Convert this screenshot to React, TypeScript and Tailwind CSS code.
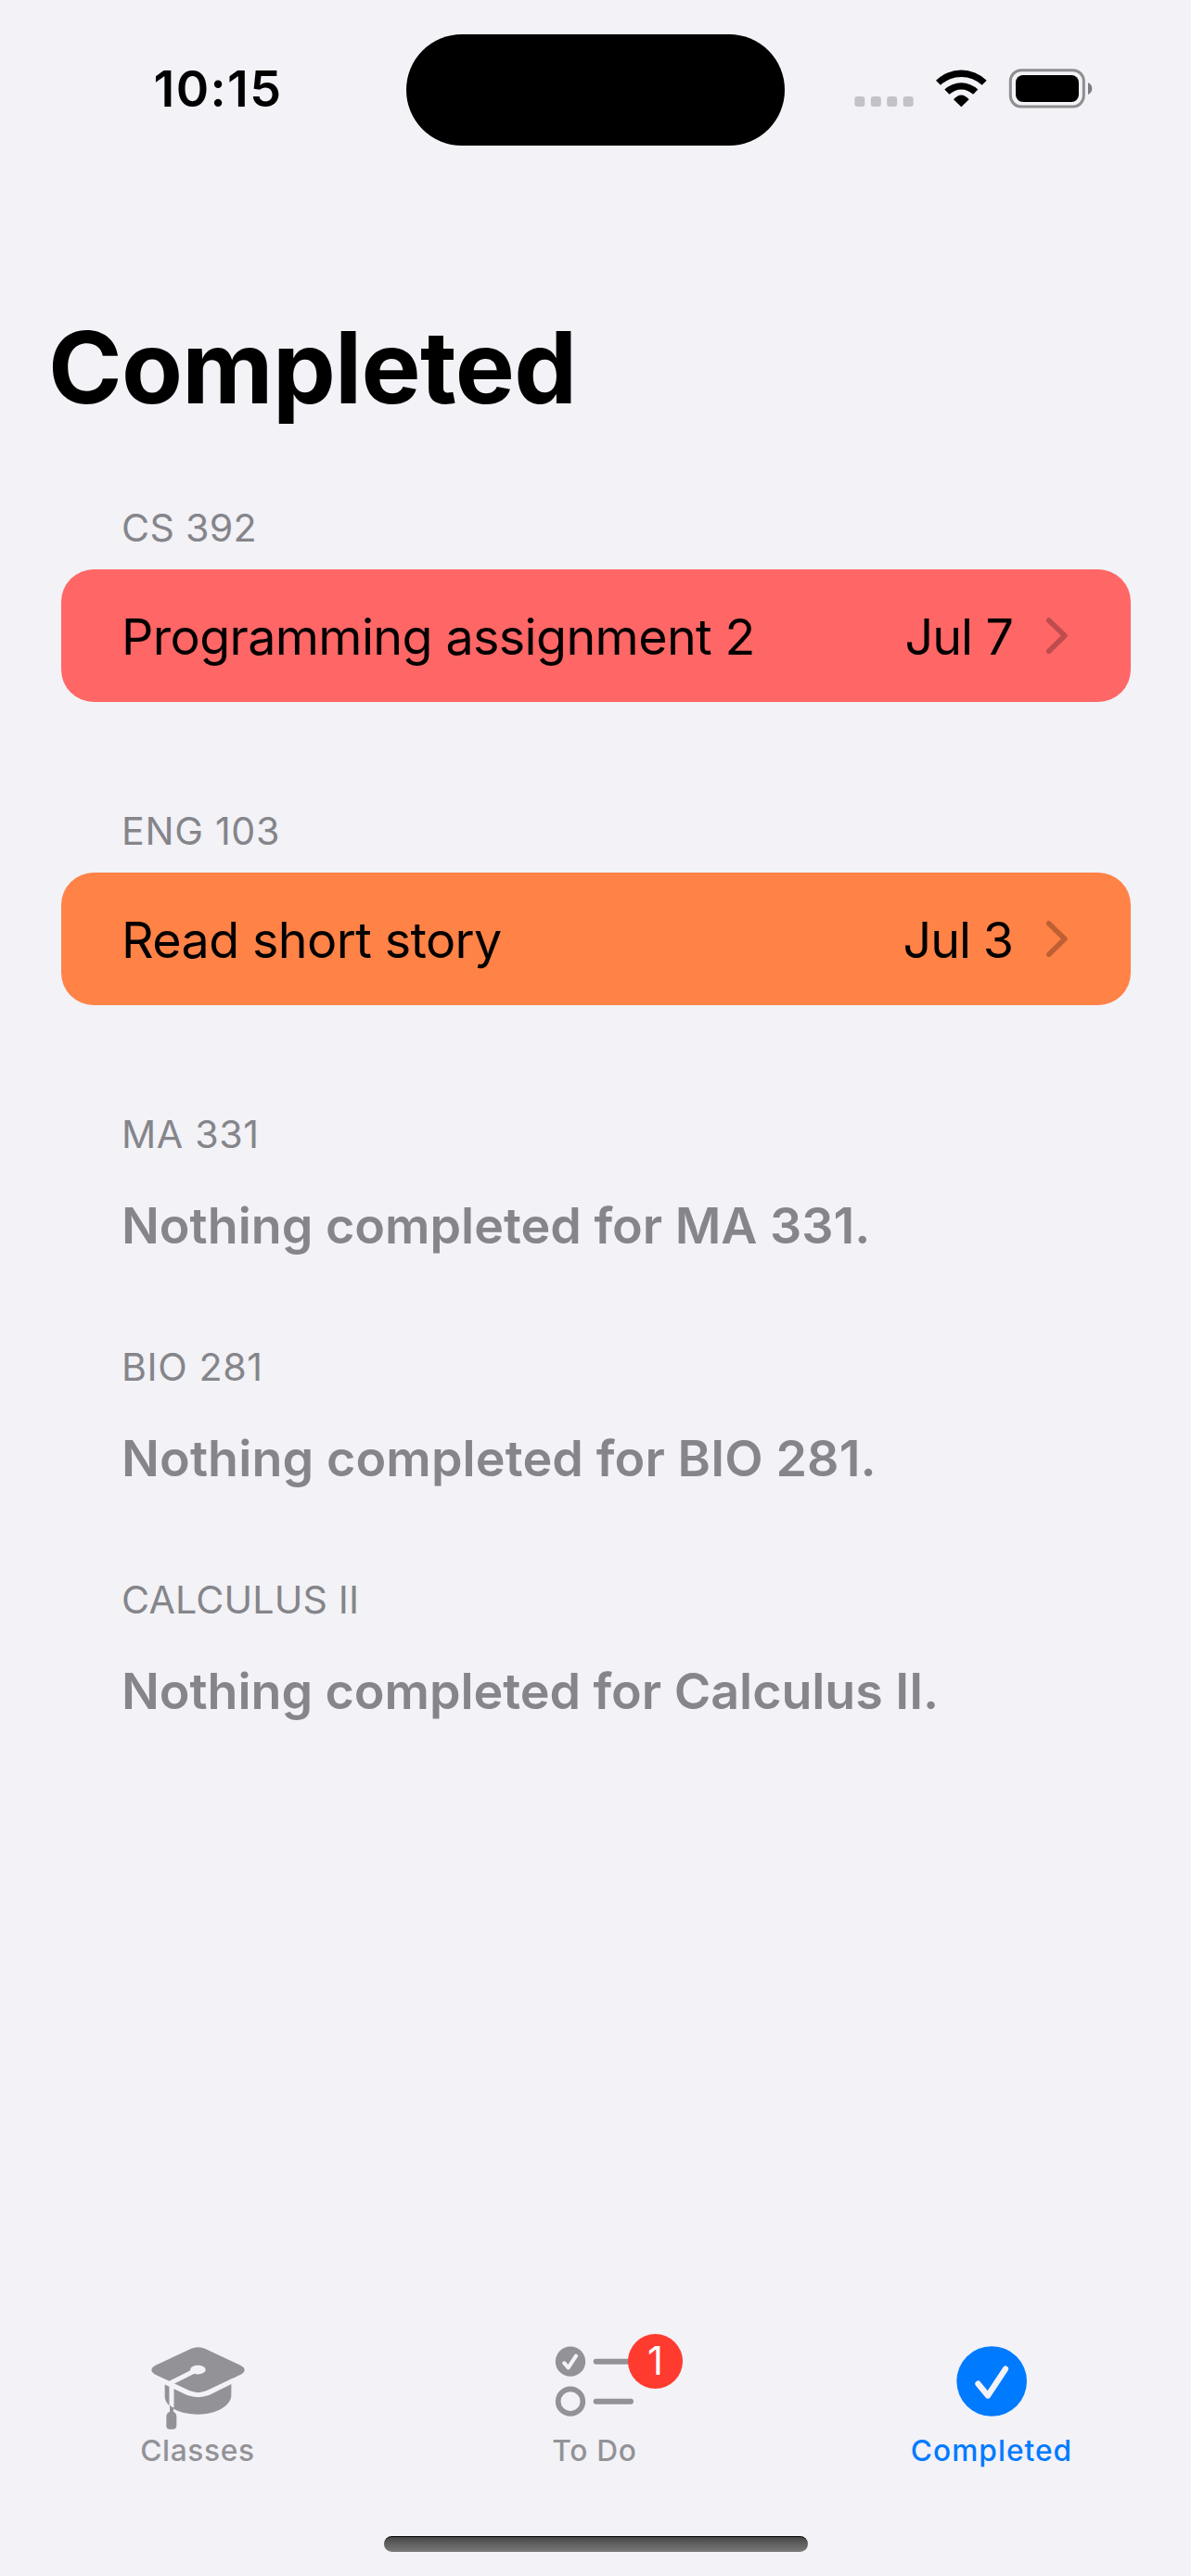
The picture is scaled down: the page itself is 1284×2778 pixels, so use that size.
import type { ReactNode } from 'react';

type Section = {
  course: string;
  headerTracking: string;
  task?: { title: string; titleTracking: string; due: string; dueTracking: string; color: string };
  empty?: { text: string; tracking: string };
};

const sections: Section[] = [
  {
    course: 'CS 392',
    headerTracking: 'tracking-[0.3px]',
    task: {
      title: 'Programming assignment 2',
      titleTracking: 'tracking-[-0.6px]',
      due: 'Jul 7',
      dueTracking: 'tracking-[-0.9px]',
      color: 'bg-[#ff6666]',
    },
  },
  {
    course: 'ENG 103',
    headerTracking: 'tracking-[0.7px]',
    task: {
      title: 'Read short story',
      titleTracking: 'tracking-[-0.6px]',
      due: 'Jul 3',
      dueTracking: 'tracking-[-1.1px]',
      color: 'bg-[#ff8247]',
    },
  },
  {
    course: 'MA 331',
    headerTracking: 'tracking-[0.65px]',
    empty: { text: 'Nothing completed for MA 331.', tracking: 'tracking-[0.01px]' },
  },
  {
    course: 'BIO 281',
    headerTracking: 'tracking-[0.6px]',
    empty: { text: 'Nothing completed for BIO 281.', tracking: 'tracking-[0.14px]' },
  },
  {
    course: 'CALCULUS II',
    headerTracking: 'tracking-[0.15px]',
    empty: { text: 'Nothing completed for Calculus II.', tracking: 'tracking-[-0.04px]' },
  },
];

function StatusBar() {
  return (
    <div className="grid h-[157px] shrink-0 grid-cols-[438px_408px_438px] pt-[36.5px]">
      <div className="flex h-[119px] items-center justify-center pl-[32px] text-[53.8px] font-semibold tracking-[1.4px]">
        10:15
      </div>
      <div className="h-[120px] rounded-full bg-black" />
      <div className="flex h-[117px] items-center pl-[75px]">
        <svg className="h-[42px] w-[64px]" viewBox="243 162 192 126" fill="#c3c2c8">
          <rect x="244" y="252" width="33" height="33" rx="9" />
          <rect x="296.5" y="252" width="33" height="33" rx="9" />
          <rect x="348.5" y="252" width="33" height="33" rx="9" />
          <rect x="401" y="252" width="33" height="33" rx="9" />
        </svg>
        <svg className="ml-[23px] h-[42px] w-[56px]" viewBox="504 162 168 126" fill="#000">
          <path d="M507 200A118 118 0 0 1 671 200L656 215.500A97 97 0 0 0 522 215.500Z" />
          <path d="M535 229.500A78 78 0 0 1 643 229.500L627.500 245.500A55 55 0 0 0 550.500 245.500Z" />
          <path d="M589 286L564 261.500Q589 233 614 261.500Z" />
        </svg>
        <svg className="ml-[23px] h-[43px] w-[91px]" viewBox="741 161 273 129">
          <rect x="748" y="166" width="237" height="118" rx="35" fill="none" stroke="#8f8f92" strokeWidth="9" />
          <rect x="765" y="182" width="204" height="87" rx="24" fill="#000" />
          <path d="M999 206Q1012 213 1012 225.500Q1012 238 999 245Z" fill="#7d7d80" />
        </svg>
      </div>
    </div>
  );
}

function Chevron() {
  return (
    <svg className="h-[39px] w-[23px] opacity-25" viewBox="684 198.500 70 118" fill="none">
      <path d="M692.500 207L744.500 257.500L692.500 308.500" stroke="#000" strokeWidth="17" strokeLinecap="round" strokeLinejoin="round" />
    </svg>
  );
}

function CourseSection({ section }: { section: Section }) {
  const { course, headerTracking, task, empty } = section;
  return (
    <section className={task ? 'mb-[106px]' : 'mb-[66px]'}>
      <h2 className={`mb-[14px] flex h-16 items-center pt-[3px] pl-[131px] text-[41.2px] text-[#85858a] ${headerTracking}`}>
        {course}
      </h2>
      {task && (
        <div className={`mx-[65.5px] flex h-[143px] items-center rounded-[35px] pr-[67.5px] pl-[65.5px] text-[53.8px] ${task.color}`}>
          <span className={`flex-1 pt-[3px] ${task.titleTracking}`}>{task.title}</span>
          <span className={`pt-[3px] ${task.dueTracking}`}>{task.due}</span>
          <span className="ml-[36px]">
            <Chevron />
          </span>
        </div>
      )}
      {empty && (
        <p className={`flex h-[107px] items-center pt-[2px] pl-[131px] text-[53.8px] font-semibold text-[#85858a] ${empty.tracking}`}>
          {empty.text}
        </p>
      )}
    </section>
  );
}

function Tab({ label, color, tracking, children }: { label: string; color: string; tracking: string; children: ReactNode }) {
  return (
    <div className={`flex flex-col items-center ${color}`}>
      <div className="relative h-[96px] w-[110px]">{children}</div>
      <span className={`-mt-[2px] flex h-10 items-center pt-[2px] pr-[2px] text-[31.7px] font-medium ${tracking}`}>{label}</span>
    </div>
  );
}

function ClassesIcon() {
  return (
    <svg className="h-[96px] w-[110px]" viewBox="177 85 330 288" fill="none">
      <path d="M233 208V254C233 288 282 312 340 312C400 312 448 284 448 250V208L372 243Q340 262 308 243Z" fill="currentColor" />
      <path
        d="M317 100Q341 89 364 100L479 154Q503 168 479 183L367 236Q341 247 314 236L202 183Q178 168 202 154Z"
        fill="currentColor"
      />
      <path d="M222 202L308 243Q341 255 373 243L456 202" stroke="#f2f2f7" strokeWidth="15" />
      <ellipse cx="340" cy="168" rx="25" ry="14.500" fill="#f2f2f7" />
      <path d="M330 171L255 209V290" stroke="#f2f2f7" strokeWidth="15" />
      <path d="M249 282L261 292V303Q271 308 271 320V348Q271 360 259 360H249Q238 360 238 348V320Q238 308 249 303Z" fill="currentColor" />
    </svg>
  );
}

function TodoIcon() {
  return (
    <svg className="h-[96px] w-[110px]" viewBox="81 85 330 288" fill="none" strokeLinecap="round" strokeLinejoin="round">
      <circle cx="165" cy="141" r="48.500" fill="currentColor" />
      <path d="M145 146L158 161L183 123" stroke="#f2f2f7" strokeWidth="12.500" />
      <circle cx="165" cy="270" r="40" stroke="currentColor" strokeWidth="17" />
      <path d="M248 141H360M248 270H360" stroke="currentColor" strokeWidth="18" />
    </svg>
  );
}

function CompletedIcon() {
  return (
    <svg className="h-[96px] w-[110px]" viewBox="195 85 330 288" fill="none" strokeLinecap="round" strokeLinejoin="round">
      <circle cx="357.500" cy="205" r="113.500" fill="currentColor" />
      <path d="M313.500 213L345 251.500L402 165" stroke="#f2f2f7" strokeWidth="19" />
    </svg>
  );
}

export default function App() {
  return (
    <div className="flex h-[2778px] w-[1284px] flex-col overflow-hidden bg-[#f2f2f7] font-['Inter',sans-serif] text-black">
      <StatusBar />
      <h1 className="mt-[175px] flex h-32 shrink-0 items-center pt-[2px] pl-[52px] text-[107.7px] font-bold tracking-[-0.7px]">
        Completed
      </h1>
      <main className="mt-[76px] flex-1">
        {sections.map((section) => (
          <CourseSection key={section.course} section={section} />
        ))}
      </main>
      <nav className="grid h-[207px] shrink-0 grid-cols-3">
        <Tab label="Classes" color="text-[#929297]" tracking="tracking-[0.67px]">
          <ClassesIcon />
        </Tab>
        <Tab label="To Do" color="text-[#929297]" tracking="tracking-[0.7px]">
          <TodoIcon />
          <span className="absolute -top-[11px] left-[90px] flex size-[59px] items-center justify-center rounded-full bg-[#ff3b30] text-[41.7px] text-white">
            1
          </span>
        </Tab>
        <Tab label="Completed" color="text-[#007aff]" tracking="tracking-[1px]">
          <CompletedIcon />
        </Tab>
      </nav>
      <div className="mb-[26px] h-[17px] w-[457px] shrink-0 self-center rounded-full border-t border-black bg-linear-to-b from-[#484848] to-[#7a7a7a]" />
    </div>
  );
}
